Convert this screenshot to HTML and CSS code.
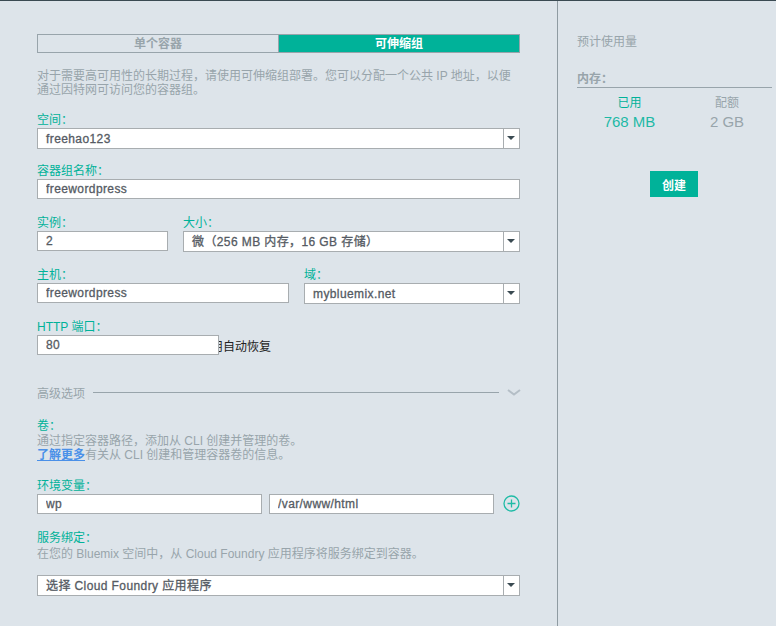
FILE: index.html
```html
<!DOCTYPE html>
<html lang="zh-CN">
<head>
  <meta charset="UTF-8">
  <title>创建容器组</title>
  <link rel="stylesheet" href="styles.css">
</head>
<body>
  <div class="page">
    <div class="main">
      <div class="tabs">
        <div class="tab">单个容器</div>
        <div class="tab tab-on">可伸缩组</div>
      </div>
      <p class="note intro">对于需要高可用性的长期过程，请使用可伸缩组部署。您可以分配一个公共 IP 地址，以便通过因特网可访问您的容器组。</p>

      <div class="field f-space">
        <label>空间：</label>
        <div class="select"><span>freehao123</span><i class="arrow"></i></div>
      </div>
      <div class="field f-name">
        <label>容器组名称：</label>
        <input type="text" value="freewordpress">
      </div>

      <div class="row r-size">
        <div class="field w-count">
          <label>实例：</label>
          <input type="text" value="2">
        </div>
        <div class="field grow">
          <label>大小：</label>
          <div class="select"><span>微（256 MB 内存，16 GB 存储）</span><i class="arrow"></i></div>
        </div>
      </div>

      <div class="row r-host">
        <div class="field w-host">
          <label>主机：</label>
          <input type="text" value="freewordpress">
        </div>
        <div class="field grow">
          <label>域：</label>
          <div class="select"><span>mybluemix.net</span><i class="arrow"></i></div>
        </div>
      </div>

      <div class="field f-port">
        <label>HTTP 端口：</label>
        <div class="port-line">
          <input type="text" class="port" value="80">
          <span class="restart">启用自动恢复</span>
        </div>
      </div>

      <div class="advanced">
        <span class="adv-title">高级选项</span>
        <span class="adv-line"></span>
        <svg class="chevron" width="14" height="7" viewBox="0 0 14 7"><path d="M1 1l6 4.5L13 1" fill="none" stroke="#b4bec6" stroke-width="2"/></svg>
      </div>

      <div class="volume">
        <label>卷：</label>
        <p class="note">通过指定容器路径，添加从 CLI 创建并管理的卷。<br><a href="#">了解更多</a>有关从 CLI 创建和管理容器卷的信息。</p>
      </div>

      <div class="field f-env">
        <label>环境变量：</label>
        <div class="env-line">
          <input type="text" class="env-key" value="wp">
          <input type="text" class="env-val" value="/var/www/html">
          <svg class="plus" width="17" height="17" viewBox="0 0 17 17"><circle cx="8.5" cy="8.5" r="7.5" fill="none" stroke="#1fbba6" stroke-width="1.3"/><path d="M8.5 4.5v8M4.5 8.5h8" stroke="#1fbba6" stroke-width="1.3"/></svg>
        </div>
      </div>

      <div class="field f-bind">
        <label>服务绑定：</label>
        <p class="note">在您的 Bluemix 空间中，从 Cloud Foundry 应用程序将服务绑定到容器。</p>
        <div class="select"><span>选择 Cloud Foundry 应用程序</span><i class="arrow"></i></div>
      </div>
    </div>

    <div class="side">
      <div class="side-title">预计使用量</div>
      <div class="side-head">内存：</div>
      <div class="usage">
        <div class="used"><div>已用</div><div class="num">768 MB</div></div>
        <div class="quota"><div>配额</div><div class="num">2 GB</div></div>
      </div>
      <div class="side-btn"><button type="button">创建</button></div>
    </div>
  </div>
</body>
</html>
```

FILE: styles.css
```css
html, body { margin: 0; padding: 0; height: 100%; overflow: hidden; }
body {
  background: #dde4ea;
  font-family: "Liberation Sans", "Noto Sans CJK SC", sans-serif;
  font-size: 12px;
  color: #98a4ab;
}
.page {
  display: flex;
  height: 625px;
  border-top: 1px solid #3a4a52;
}
.main {
  width: 483px;
  padding: 33px 37px 0;
  border-right: 1px solid #8f9ba2;
}
.side {
  flex: 1;
  padding: 33px 4px 0 19px;
}

/* tabs */
.tabs {
  display: flex;
  height: 19px;
  border: 1px solid #98a4ab;
  box-sizing: border-box;
}
.tab {
  flex: 1;
  text-align: center;
  font-weight: bold;
  line-height: 19px;
}
.tab:first-child { border-right: 1px solid #98a4ab; }
.tab-on { background: #00b299; color: #fff; }

.note { margin: 0; line-height: 14px; color: #98a4ab; }
.intro { margin-top: 16px; }
.note a { color: #4a90e8; font-weight: bold; }

/* form */
label {
  display: block;
  color: #00b299;
  line-height: 14px;
  height: 15px;
}
input, .select {
  display: block;
  width: 100%;
  box-sizing: border-box;
  height: 20px;
  border: 1px solid #a8adb0;
  background: #fff;
  font-family: inherit;
  font-size: 12px;
  letter-spacing: .4px;
  -webkit-text-stroke: .3px;
  color: #555b63;
  padding: 0 0 0 8px;
  margin: 0;
  outline: none;
  border-radius: 0;
}
.select {
  display: flex;
  height: 21px;
  line-height: 21px;
  padding-right: 0;
}
.select span { flex: 1; }
.arrow {
  width: 15px;
  border-left: 1px solid #a8adb0;
  position: relative;
}
.arrow::after {
  content: "";
  position: absolute;
  left: 3px;
  top: 7px;
  border: 4px solid transparent;
  border-top: 4px solid #3a4a52;
  border-bottom: 0;
}

.f-space { margin-top: 16px; }
.f-name { margin-top: 15px; }
.row { display: flex; }
.grow { flex: 1; }
.r-size { margin-top: 17px; }
.w-count { width: 131px; margin-right: 15px; }
.r-host { margin-top: 16px; }
.w-host { width: 252px; margin-right: 15px; }
.f-port { margin-top: 16px; }
.port-line { display: flex; align-items: center; }
.port {
  width: 182px;
  position: relative;
  z-index: 1;
}
.restart {
  margin-left: -20px;
  color: #222;
}

.advanced {
  display: flex;
  align-items: center;
  margin-top: 29px;
  height: 16px;
}
.adv-title { margin-right: 8px; }
.adv-line { flex: 1; height: 1px; background: #98a4ab; }
.chevron { margin-left: 8px; margin-right: -1px; }

.volume { margin-top: 19px; }
.f-env { margin-top: 17px; }
.env-line { display: flex; align-items: center; }
.env-key { width: 225px; margin-right: 7px; }
.env-val { width: 225px; margin-right: 9px; }
.plus { flex: none; margin-bottom: 2px; }
.f-bind { margin-top: 17px; }
.f-bind .note { margin-top: 1px; }
.f-bind .select { margin-top: 14px; }

/* side panel */
.side-title { line-height: 16px; }
.side-head {
  margin-top: 22px;
  font-weight: bold;
  line-height: 14px;
  height: 15px;
  border-bottom: 1px solid #98a4ab;
}
.usage {
  display: flex;
  text-align: center;
  margin-top: 8px;
  line-height: 14px;
}
.used { width: 105px; color: #00b299; }
.quota { width: 90px; }
.num { font-size: 15px; line-height: 20px; margin-top: 2px; }
.used .num { color: #1db9a6; }
.side-btn { margin-top: 39px; padding-left: 73px; }
button {
  display: block;
  width: 48px;
  height: 26px;
  border: 0;
  background: #00b299;
  color: #fff;
  font-family: inherit;
  font-size: 12px;
  font-weight: bold;
  padding: 0;
}
```
